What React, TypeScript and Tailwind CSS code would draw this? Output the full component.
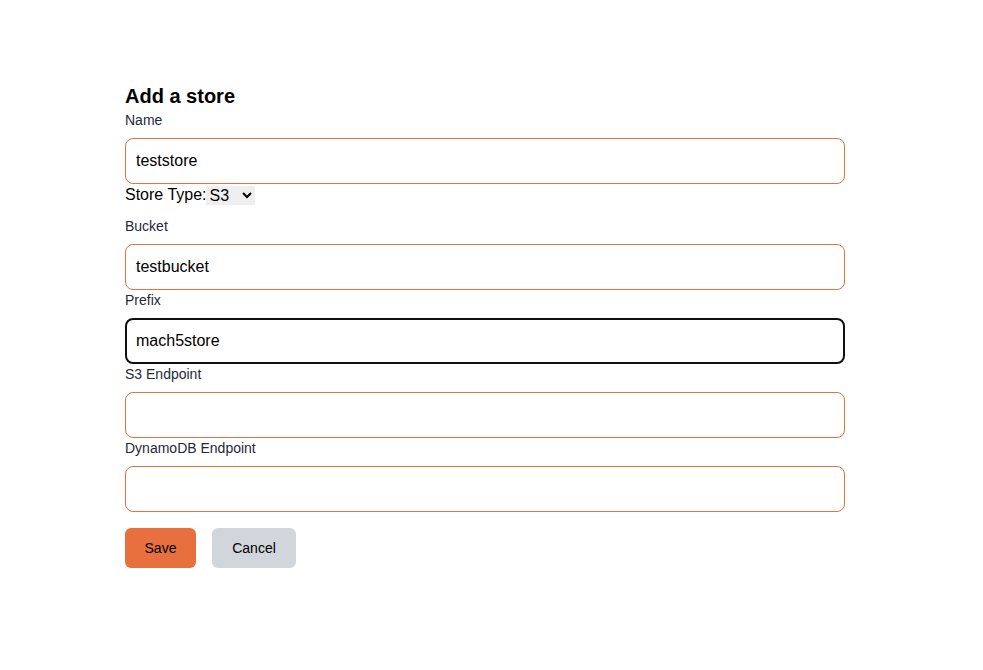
import { useState } from "react";

// Simple "add store" form
interface StoreForm {
    name: string;
    storeType: string;
    bucket: string;
    prefix: string;
    s3Endpoint: string;
    dynamoEndpoint: string;
}

const inputClass =
    "block w-full h-[46px] rounded-lg border border-[#e8703f] bg-white px-[10px] text-base text-black focus:outline-none";

export default function App() {
    const [form, setForm] = useState<StoreForm>({
        name: "teststore",
        storeType: "S3",
        bucket: "testbucket",
        prefix: "mach5store",
        s3Endpoint: "",
        dynamoEndpoint: "",
    });

    const update = (key: keyof StoreForm, value: string) => {
        setForm({ ...form, [key]: value });
    };

    return (
        <div className="min-h-screen bg-white font-['Liberation_Sans',Arial,sans-serif] text-black">
            <div className="ml-[125px] w-[720px] pt-[82px]">
                <h2 className="text-xl font-bold leading-7">Add a store</h2>

                <label className="block text-sm leading-5 text-gray-800 mb-2">Name</label>
                <input
                    className={inputClass}
                    value={form.name}
                    onChange={(e) => update("name", e.target.value)}
                />

                <div className="flex items-center h-[22px]">
                    <span className="text-base">Store Type:</span>
                    <select
                        className="-ml-[1px] h-[19px] w-[49px] bg-[#efefef] text-base leading-none"
                        value={form.storeType}
                        onChange={(e) => update("storeType", e.target.value)}
                    >
                        <option value="S3">S3</option>
                        <option value="Local">Local</option>
                    </select>
                </div>

                <label className="mt-[10px] block text-sm leading-5 text-gray-800 mb-2">Bucket</label>
                <input
                    className={inputClass}
                    value={form.bucket}
                    onChange={(e) => update("bucket", e.target.value)}
                />

                <label className="block text-sm leading-5 text-gray-800 mb-2">Prefix</label>
                <input
                    className="block w-full h-[46px] rounded-lg border-2 border-[#101010] bg-white px-[9px] text-base text-black focus:outline-none"
                    value={form.prefix}
                    onChange={(e) => update("prefix", e.target.value)}
                />

                <label className="block text-sm leading-5 text-gray-800 mb-2">S3 Endpoint</label>
                <input
                    className={inputClass}
                    value={form.s3Endpoint}
                    onChange={(e) => update("s3Endpoint", e.target.value)}
                />

                <label className="block text-sm leading-5 text-gray-800 mb-2">DynamoDB Endpoint</label>
                <input
                    className={inputClass}
                    value={form.dynamoEndpoint}
                    onChange={(e) => update("dynamoEndpoint", e.target.value)}
                />

                <div className="mt-4 flex gap-4">
                    <button className="h-10 w-[71px] rounded-md bg-[#e8703f] text-sm text-black">
                        Save
                    </button>
                    <button className="h-10 w-[84px] rounded-md bg-gray-300 text-sm text-black">
                        Cancel
                    </button>
                </div>
            </div>
        </div>
    );
}
